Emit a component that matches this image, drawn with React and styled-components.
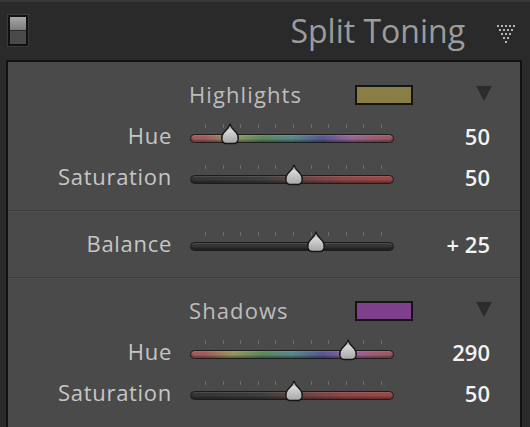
import styled, { createGlobalStyle } from 'styled-components'

const GlobalStyle = createGlobalStyle`
  html, body {
    margin: 0;
    padding: 0;
    background: #2a2a2a;
  }
  body {
    font-family: "Open Sans", "Noto Sans", sans-serif;
    overflow: hidden;
  }
`

// Header bar
const Page = styled.div`
  width: 530px;
  height: 427px;
  background: #2a2a2a;
  border-top: 2px solid #383838;
  box-sizing: border-box;
  overflow: hidden;
`

const Header = styled.div`
  height: 58px;
  display: flex;
  align-items: center;
  padding: 0 15px 0 8px;
`

const Switch = styled.div`
  width: 16px;
  height: 27px;
  border: 2px solid #111;
  box-shadow: 0 0 0 1px #3a3a3a;
  display: flex;
  flex-direction: column;
  margin-top: -2px;
`

const SwitchTop = styled.div`
  flex: 1;
  background: linear-gradient(#a8a8a8, #7a7a7a);
`

const SwitchBottom = styled.div`
  flex: 1;
  background: #4a4a4a;
  border-top: 1px solid #2a2a2a;
`

const Title = styled.div`
  margin-left: auto;
  color: #9c9c9c;
  font-size: 32px;
  line-height: 1;
  margin-top: 0px;
`

const FilterIcon = styled.svg`
  margin-left: 32px;
  margin-top: 6px;
`

// Panel
const Panel = styled.div`
  margin: 0 8px 0 6px;
  border: 2px solid #111;
  border-bottom: none;
  background: #4a4a4a;
  height: 400px;
`

const Section = styled.div`
  padding: 13px 0 12px;
  border-top: ${(p) => (p.$first ? 'none' : '1px solid #3c3c3c')};
  box-shadow: ${(p) => (p.$first ? 'none' : 'inset 0 1px 0 #505050')};
`

const HeadRow = styled.div`
  height: 41px;
  display: flex;
  align-items: center;
  padding: 0 28px 0 181px;
`

const HeadLabel = styled.div`
  width: 166px;
  color: #bdbdbd;
  font-size: 22px;
  letter-spacing: 1.1px;
  margin-top: -4px;
`

const Swatch = styled.div`
  width: 54px;
  height: 16px;
  border: 2px solid #151515;
  background: ${(p) => p.$color};
  margin-top: -2px;
`

const Disclosure = styled.div`
  margin-left: auto;
  width: 0;
  height: 0;
  border-left: 8px solid transparent;
  border-right: 8px solid transparent;
  border-top: 15px solid #2c2c2c;
  margin-top: -4px;
`

const Row = styled.div`
  height: 41px;
  display: grid;
  grid-template-columns: 164px 204px 1fr;
  column-gap: 18px;
  align-items: center;
  padding-right: 30px;
`

const Label = styled.div`
  text-align: right;
  color: #c6c6c6;
  font-size: 22px;
  letter-spacing: 0.7px;
  margin-top: -4px;
`

const Value = styled.div`
  text-align: right;
  color: #f2f2f2;
  font-size: 22px;
  font-weight: 600;
  margin-top: -2px;
  white-space: pre;
`

// Slider
const SliderBox = styled.div`
  position: relative;
  height: 26px;
`

const Ticks = styled.div`
  display: flex;
  justify-content: space-between;
  padding: 0 12px 0 15px;
  height: 4px;
`

const Tick = styled.span`
  width: 1px;
  height: 4px;
  background: #6c6c6c;
`

const Track = styled.div`
  margin-top: 6px;
  height: 7px;
  border: 1px solid #1c1c1c;
  border-radius: 5px;
  background: ${(p) => p.$fill};
  box-shadow: inset 0 1px 0 rgba(255, 255, 255, 0.1), inset 0 -2px 2px rgba(0, 0, 0, 0.35);
`

const Thumb = styled.svg`
  position: absolute;
  top: -1px;
`

const hueFill = `linear-gradient(to right,
  hsl(0, 28%, 50%) 0%,
  hsl(0, 28%, 50%) 7%,
  hsl(60, 24%, 48%) 21%,
  hsl(120, 20%, 45%) 36%,
  hsl(180, 24%, 44%) 50%,
  hsl(240, 26%, 47%) 65%,
  hsl(300, 22%, 50%) 79%,
  hsl(345, 28%, 50%) 93%,
  hsl(355, 28%, 48%) 100%)`

const satFill = `linear-gradient(to right,
  #353535 0%, #3e3e3e 35%, #624444 52%, #8e4848 75%, #9c4848 100%)`

const balanceFill = `linear-gradient(#3a3a3a, #2e2e2e)`

function Slider({ fraction, fill }) {
  const left = 15 + fraction * 177 - 11
  return (
    <SliderBox>
      <Ticks>
        {Array.from({ length: 11 }).map((_, i) => (
          <Tick key={i} />
        ))}
      </Ticks>
      <Track $fill={fill} />
      <Thumb width="22" height="22" viewBox="0 0 22 22" style={{ left }}>
        <defs>
          <linearGradient id="thumbGrad" x1="0" y1="0" x2="0" y2="1">
            <stop offset="0" stopColor="#6a6a6a" />
            <stop offset="0.3" stopColor="#d8d8d8" />
            <stop offset="1" stopColor="#a6a6a6" />
          </linearGradient>
        </defs>
        <path
          d="M11 1 L13 5 L17.5 10 Q20 13 19 17 Q18 20.5 15 20.5 L7 20.5 Q4 20.5 3 17 Q2 13 4.5 10 L9 5 Z"
          fill="url(#thumbGrad)"
          stroke="#161616"
          strokeWidth="1.3"
          strokeLinejoin="round"
        />
      </Thumb>
    </SliderBox>
  )
}

function SliderRow({ label, value, fraction, fill }) {
  return (
    <Row>
      <Label>{label}</Label>
      <Slider fraction={fraction} fill={fill} />
      <Value>{value}</Value>
    </Row>
  )
}

function ToneHeader({ title, color }) {
  return (
    <HeadRow>
      <HeadLabel>{title}</HeadLabel>
      <Swatch $color={color} />
      <Disclosure />
    </HeadRow>
  )
}

export default function App() {
  const dots = []
  for (let r = 0; r < 5; r++) {
    for (let c = 0; c < 5 - r; c++) {
      dots.push(<rect key={`${r}-${c}`} x={c * 4 + r * 2} y={r * 4} width="2" height="2" fill="#b4b4b4" />)
    }
  }

  return (
    <Page>
      <GlobalStyle />
      <Header>
        <Switch>
          <SwitchTop />
          <SwitchBottom />
        </Switch>
        <Title>Split Toning</Title>
        <FilterIcon width="18" height="18" viewBox="0 0 18 18">
          {dots}
        </FilterIcon>
      </Header>
      <Panel>
        <Section $first>
          <ToneHeader title="Highlights" color="#8b7e44" />
          <SliderRow label="Hue" value="50" fraction={50 / 360} fill={hueFill} />
          <SliderRow label="Saturation" value="50" fraction={0.5} fill={satFill} />
        </Section>
        <Section>
          <SliderRow label="Balance" value="+ 25" fraction={0.625} fill={balanceFill} />
        </Section>
        <Section>
          <ToneHeader title="Shadows" color="#7e3f8c" />
          <SliderRow label="Hue" value="290" fraction={290 / 360} fill={hueFill} />
          <SliderRow label="Saturation" value="50" fraction={0.5} fill={satFill} />
        </Section>
      </Panel>
    </Page>
  )
}
